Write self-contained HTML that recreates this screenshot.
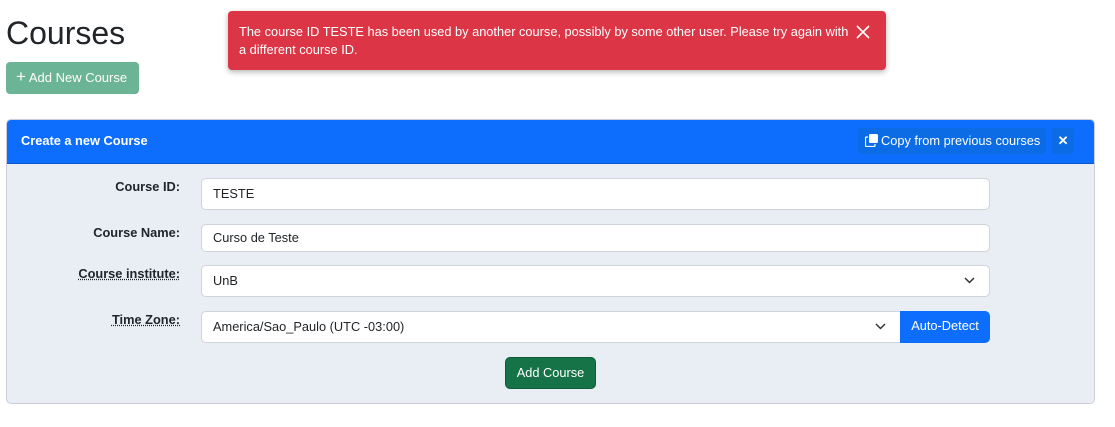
<!DOCTYPE html>
<html><head><style>
*{box-sizing:border-box}
body{margin:0;width:1115px;height:427px;background:#fff;font-family:"Liberation Sans",sans-serif;color:#212529;position:relative;overflow:hidden}
h1{position:absolute;left:6px;top:15px;margin:0;font-size:32px;font-weight:400}
.addnew{position:absolute;left:6px;top:62px;width:133px;height:32px;background:#6bb495;border-radius:4px;color:#fff;font-size:13px;line-height:30px;padding-left:10px}
.alert{position:absolute;left:228px;top:11px;width:658px;height:59px;background:#dc3545;border-radius:4px;color:#fff;font-size:12.8px;line-height:18px;padding:12px 28px 0 11px;box-shadow:0 2px 6px rgba(0,0,0,.3)}
.card{position:absolute;left:6px;top:119px;width:1089px;height:285px;border:1px solid #ccd;border-radius:5px;background:#e9edf4;overflow:hidden}
.hdr{height:44px;background:#0d6efd;border-bottom:1px solid #0a58ca;color:#fff;font-weight:bold;font-size:12.8px;line-height:42px;padding-left:14px;position:relative}
.copy{position:absolute;left:851px;top:8px;width:188px;height:26px;background:#0b6ce6;border-radius:3px;font-weight:400;line-height:26px;padding-left:23px}
.xb{position:absolute;left:1045px;top:8px;width:22px;height:26px;background:#0b6ce6;border-radius:3px;text-align:center;line-height:26px}
.lbl{position:absolute;right:914px;font-size:12.8px;font-weight:bold}
.dot{text-decoration:underline dotted}
.in{position:absolute;left:194px;width:789px;background:#fff;border:1px solid #ced4da;border-radius:5px;font-size:12.8px;padding-left:11px}
.chev{position:absolute;right:14px;top:50%;margin-top:-4px}
.btn{position:absolute;border-radius:5px;color:#fff;font-size:12.8px;text-align:center}
</style></head><body>
<h1>Courses</h1>
<div class="addnew"><span style="font-size:17px">+</span> Add New Course</div>
<div class="alert">The course ID TESTE has been used by another course, possibly by some other user. Please try again with a different course ID.
<svg style="position:absolute;left:628px;top:14px" width="14" height="14" viewBox="0 0 14 14"><path d="M1 1L13 13M13 1L1 13" stroke="#fff" stroke-width="1.6"/></svg></div>
<div class="card">
<div class="hdr">Create a new Course
<div class="copy"><svg style="position:absolute;left:7px;top:6px" width="13" height="13" viewBox="0 0 13 13"><rect x="4" y="0" width="9" height="9" rx="1.5" fill="#fff"/><path d="M3 3H1.5A1 1 0 0 0 .5 4v7.5a1 1 0 0 0 1 1H9a1 1 0 0 0 1-1V10" stroke="#fff" fill="none" stroke-width="1.2"/></svg>Copy from previous courses</div>
<div class="xb">✕</div></div>
<div class="lbl" style="top:59px">Course ID:</div>
<div class="in" style="top:58px;height:32px;line-height:30px">TESTE</div>
<div class="lbl" style="top:105px">Course Name:</div>
<div class="in" style="top:104px;height:28px;line-height:26px">Curso de Teste</div>
<div class="lbl dot" style="top:146px">Course institute:</div>
<div class="in" style="top:145px;height:32px;line-height:30px">UnB<svg class="chev" width="11" height="7" viewBox="0 0 11 7"><path d="M1 1l4.5 4.5L10 1" stroke="#333" fill="none" stroke-width="1.5"/></svg></div>
<div class="lbl dot" style="top:192px">Time Zone:</div>
<div class="in" style="top:191px;height:32px;line-height:30px;width:700px;border-radius:5px 0 0 5px">America/Sao_Paulo (UTC -03:00)<svg class="chev" width="11" height="7" viewBox="0 0 11 7"><path d="M1 1l4.5 4.5L10 1" stroke="#333" fill="none" stroke-width="1.5"/></svg></div>
<div class="btn" style="left:893px;top:191px;width:90px;height:32px;line-height:30px;background:#0d6efd;border-radius:0 5px 5px 0">Auto-Detect</div>
<div class="btn" style="left:498px;top:237px;width:91px;height:32px;line-height:30px;background:#157347;border:1px solid #0f5c38">Add Course</div>
</div>
</body></html>
